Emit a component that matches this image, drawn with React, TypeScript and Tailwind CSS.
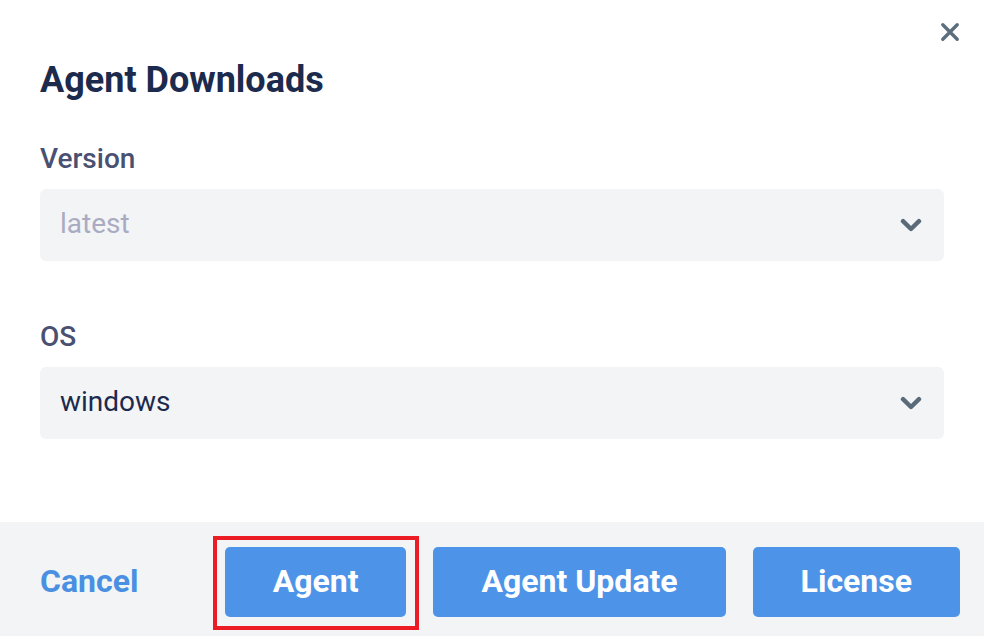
import React from "react";

function Chevron() {
  return (
    <svg width="22" height="14" viewBox="0 0 22 14" fill="none">
      <path
        d="M3 3.2 L11 11 L19 3.2"
        stroke="#5a6a79"
        strokeWidth="4.4"
        strokeLinecap="round"
        strokeLinejoin="round"
      />
    </svg>
  );
}

function Select({ value, placeholder }: { value: string; placeholder?: boolean }) {
  return (
    <div className="mt-[14px] flex h-[72px] items-center justify-between rounded-[6px] bg-[#f3f4f6] pl-[20px] pr-[22px]">
      <span
        className={
          "pb-[2px] text-[28px] leading-[32px] " +
          (placeholder ? "text-[#a9abc2]" : "text-[#1c2a4d]")
        }
      >
        {value}
      </span>
      <Chevron />
    </div>
  );
}

export default function App() {
  return (
    <div
      className="relative flex h-[636px] w-full flex-col overflow-hidden bg-white"
      style={{ fontFamily: "Roboto, 'Liberation Sans', sans-serif" }}
    >
      <button className="absolute right-[24px] top-[22px] flex h-[20px] w-[20px] items-center justify-center">
        <svg width="20" height="20" viewBox="0 0 20 20" fill="none">
          <path
            d="M2.8 2.8 L17.2 17.2 M17.2 2.8 L2.8 17.2"
            stroke="#5c6d7b"
            strokeWidth="3.4"
            strokeLinecap="round"
          />
        </svg>
      </button>

      <div className="flex-1 px-[40px] pt-[58px]">
        <h1 className="text-[36px] font-bold leading-[44px] text-[#1c2a4d]">
          Agent Downloads
        </h1>

        <div className="mt-[41px]">
          <div className="text-[28px] font-medium leading-[32px] text-[#4a5072]">
            Version
          </div>
          <Select value="latest" placeholder />
        </div>

        <div className="mt-[60px]">
          <div className="text-[28px] font-medium leading-[32px] text-[#4a5072]">
            OS
          </div>
          <Select value="windows" />
        </div>
      </div>

      <div className="flex shrink-0 items-center justify-between bg-[#f3f4f6] pb-[19px] pl-[40px] pr-[24px] pt-[25px]">
        <button className="pb-[2px] text-[32px] font-bold leading-[38px] text-[#4a90e2]">
          Cancel
        </button>
        <div className="flex gap-[27px]">
          <div className="relative">
            <button className="h-[70px] rounded-[5px] bg-[#4d94e9] px-[48px] pb-[2px] text-[32px] font-bold text-white">
              Agent
            </button>
            <div className="pointer-events-none absolute -bottom-[13px] -left-[12px] -right-[13px] -top-[11px] border-[4px] border-[#ec1c24]" />
          </div>
          <button className="h-[70px] rounded-[5px] bg-[#4d94e9] px-[48px] pb-[2px] text-[32px] font-bold text-white">
            Agent Update
          </button>
          <button className="h-[70px] rounded-[5px] bg-[#4d94e9] px-[48px] pb-[2px] text-[32px] font-bold text-white">
            License
          </button>
        </div>
      </div>
    </div>
  );
}
